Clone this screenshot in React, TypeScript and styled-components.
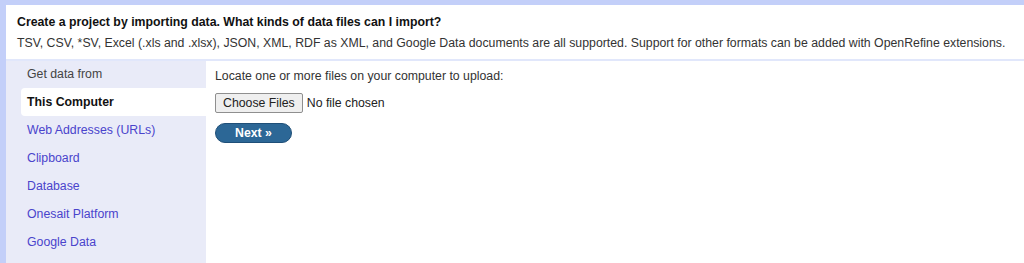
import styled, { createGlobalStyle } from "styled-components";

const sources = [
    "Web Addresses (URLs)",
    "Clipboard",
    "Database",
    "Onesait Platform",
    "Google Data",
];

const GlobalStyle = createGlobalStyle`
    html, body {
        margin: 0;
        padding: 0;
        background: #ffffff;
    }

    body {
        font-family: "Liberation Sans", Arial, sans-serif;
        font-size: 12.3px;
        color: #222;
    }
`;

const App = () => {
    return (
        <>
            <GlobalStyle />
            <ImportPage>
                <ImportHeader>
                    <ImportTitle>Create a project by importing data. What kinds of data files can I import?</ImportTitle>
                    <ImportDescription>
                        TSV, CSV, *SV, Excel (.xls and .xlsx), JSON, XML, RDF as XML, and Google Data documents are all supported. Support for other formats can be added with OpenRefine extensions.
                    </ImportDescription>
                </ImportHeader>
                <ImportBody>
                    <SourceList>
                        <SourceHeading>Get data from</SourceHeading>
                        <SourceItem selected>This Computer</SourceItem>
                        {
                            sources.map((item) => {
                                return <SourceItem key={item}>{item}</SourceItem>
                            })
                        }
                    </SourceList>
                    <SourcePanel>
                        <PanelLabel>Locate one or more files on your computer to upload:</PanelLabel>
                        <FileRow>
                            <ChooseButton>Choose Files</ChooseButton>
                            <FileStatus>No file chosen</FileStatus>
                        </FileRow>
                        <NextButton>Next »</NextButton>
                    </SourcePanel>
                </ImportBody>
            </ImportPage>
        </>
    );
};

const ImportPage = styled.div`
    width: 1024px;
    height: 263px;
    box-sizing: border-box;
    border-top: 5px solid #c3cff9;
    border-left: 6px solid #c3cff9;
    display: flex;
    flex-direction: column;
    overflow: hidden;
`;

const ImportHeader = styled.div`
    padding: 10px 0 0 11px;
    height: 56px;
    flex-shrink: 0;
    box-sizing: border-box;
    border-bottom: 2px solid #e1e7fb;
    background: #ffffff;
`;

const ImportTitle = styled.div`
    font-size: 12.3px;
    font-weight: 700;
    color: #111;
    line-height: 15px;
`;

const ImportDescription = styled.div`
    margin-top: 6px;
    font-size: 12.3px;
    color: #333;
    line-height: 15px;
    white-space: nowrap;
`;

const ImportBody = styled.div`
    flex: 1;
    display: flex;
`;

const SourceList = styled.div`
    width: 200px;
    padding: 0 0 0 15px;
    box-sizing: border-box;
    background: #e9ebf8;
    display: flex;
    flex-direction: column;
`;

const SourceHeading = styled.div`
    height: 27px;
    line-height: 27px;
    padding-left: 6px;
    color: #444;
    font-size: 12.3px;
`;

const SourceItem = styled.div<{ selected?: boolean }>`
    height: 28px;
    line-height: 28px;
    padding-left: 6px;
    font-size: 12.3px;
    border-radius: 4px 0 0 4px;
    color: ${(props) => (props.selected ? "#111" : "#4a44cc")};
    font-weight: ${(props) => (props.selected ? 700 : 400)};
    background: ${(props) => (props.selected ? "#ffffff" : "transparent")};
`;

const SourcePanel = styled.div`
    flex: 1;
    padding: 8px 0 0 9px;
    display: flex;
    flex-direction: column;
    align-items: flex-start;
`;

const PanelLabel = styled.div`
    font-size: 12.3px;
    color: #333;
    line-height: 15px;
`;

const FileRow = styled.div`
    margin-top: 9px;
    display: flex;
    align-items: center;
`;

const ChooseButton = styled.div`
    height: 20px;
    box-sizing: border-box;
    padding: 0 7px;
    border: 1px solid #8f8f8f;
    border-radius: 2px;
    background: #efefef;
    line-height: 18px;
    font-size: 12.3px;
    color: #222;
`;

const FileStatus = styled.div`
    margin-left: 4px;
    font-size: 12.3px;
    color: #222;
`;

const NextButton = styled.div`
    margin-top: 10px;
    width: 77px;
    height: 20px;
    border-radius: 10px;
    background: #2c6796;
    border: 1px solid #1f4f78;
    box-sizing: border-box;
    color: #ffffff;
    font-weight: 700;
    font-size: 12.3px;
    line-height: 18px;
    text-align: center;
`;

export default App;
